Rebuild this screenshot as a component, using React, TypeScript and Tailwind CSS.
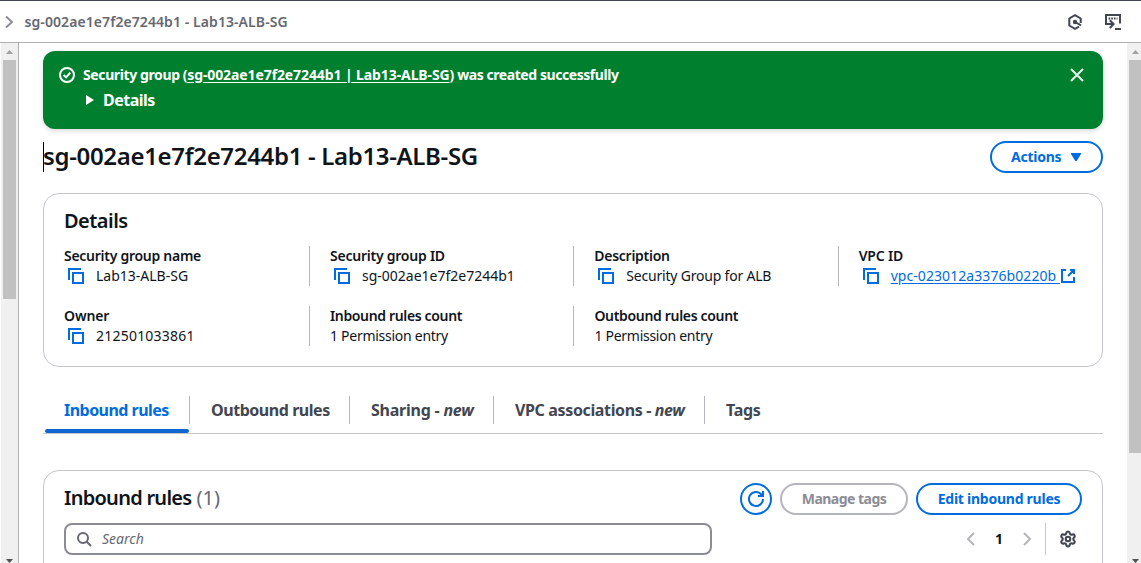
import type { ReactNode } from 'react';
import { Settings } from 'lucide-react';

function Icon({ children, className = '' }: { children: ReactNode; className?: string }) {
  return (
    <svg viewBox="0 0 16 16" className={`size-4 shrink-0 fill-none stroke-current stroke-2 ${className}`}>
      {children}
    </svg>
  );
}

function CopyIcon() {
  return (
    <Icon className="ml-1 mr-3 mt-0.5 text-[#006ce0]">
      <path d="M15 5H5v10h10V5Z" />
      <path d="M1 12V1h12" />
    </Icon>
  );
}

function Field({ label, spacing, copy, children, first }: { label: string; spacing: string; copy?: boolean; children: ReactNode; first?: boolean }) {
  return (
    <div className={first ? 'h-10 w-[245px]' : 'h-10 w-[264.4px] border-l border-[#b4b4bb] pl-5'}>
      <div className={`h-5 font-semibold ${spacing}`}>{label}</div>
      <div className="flex h-5 whitespace-nowrap">
        {copy && <CopyIcon />}
        {children}
      </div>
    </div>
  );
}

function Scrollbar({ side }: { side: 'left' | 'right' }) {
  const left = side === 'left';
  return (
    <div className={left ? 'flex w-[19px] shrink-0 flex-col items-center border-r border-l border-l-white border-r-[#b0b0b0] bg-[#f0f0f0]' : 'flex w-3.5 shrink-0 flex-col items-center bg-[#f0f0f0]'}>
      <svg viewBox="0 0 17 17" className={left ? 'h-[17px] w-[17px] shrink-0' : 'ml-0.5 h-[17px] w-[17px] shrink-0'}>
        <path d="M5 11h7L8.5 7Z" fill="#a0a0a0" />
      </svg>
      <div className={left ? 'h-[239px] w-[13px] bg-[#c1c1c1]' : 'h-[393px] w-3 self-end bg-[#c1c1c1]'} />
      <svg viewBox="0 0 17 5" className={left ? 'mt-auto h-[5px] w-[17px] shrink-0' : 'ml-0.5 mt-auto h-[5px] w-[17px] shrink-0'}>
        <path d="M5 1h7L8.5 5Z" fill="#505050" />
      </svg>
    </div>
  );
}

function Tab({ children, className = '' }: { children: ReactNode; className?: string }) {
  return (
    <div className={`h-7 whitespace-pre border-l border-[#b4b4bb] pl-[21px] leading-7 ${className}`}>{children}</div>
  );
}

export default function App() {
  return (
    <div className="flex h-[563px] w-[1141px] flex-col overflow-hidden border-t border-[#424650] bg-white font-['Noto_Sans',sans-serif] text-sm leading-5 text-[#0f141a]">
      <header className="flex h-[42px] shrink-0 items-center border-b border-[#b0b0b0]">
        <svg viewBox="0 0 10 16" className="ml-1 h-4 w-2.5 fill-none stroke-[#8c8c94] stroke-2">
          <path d="m2 2.5 6 5.5-6 5.5" />
        </svg>
        <span className="ml-[10.5px] font-semibold tracking-[0.08px] text-[#656871]">sg-002ae1e7f2e7244b1 - Lab13-ALB-SG</span>
        <Icon className="ml-auto text-[#424650]">
          <path d="M13.7 9V4.5L8 1.2 2.3 4.5v7L8 14.8l4-2.2" />
          <circle cx="8" cy="8" r="1.2" />
          <path d="m8 8 6 3.4" />
        </Icon>
        <Icon className="ml-[22px] mr-5 text-[#424650]">
          <path d="M15 9.5V1H1v9h7.5" />
          <path d="m4.8 6.2 3.8 3.8-3.8 4M10 15h6" />
          <path d="M3.5 4.5h9" strokeDasharray="1.7 1" />
        </Icon>
      </header>
      <div className="flex min-h-0 flex-1">
        <Scrollbar side="left" />
        <main className="flex min-w-0 flex-1 flex-col pl-6 pr-6 pt-2">
          <section className="flex h-[78px] shrink-0 rounded-xl bg-[#00802f] pl-4 pt-3.5 font-bold text-white shadow-[0_2px_5px_rgba(0,7,22,0.15)]">
            <Icon className="mt-0.5">
              <circle cx="8" cy="8" r="7" />
              <path d="m4.6 8 2.5 2.4 4.2-4.8" />
            </Icon>
            <div className="ml-2 whitespace-pre">
              <div className="h-5">
                <span className="tracking-[-0.39px]">Security group (</span>
                <span className="tracking-[-0.1px] underline underline-offset-2">sg-002ae1e7f2e7244b1 | Lab13-ALB-SG</span>
                <span className="tracking-[-0.43px]">) was created successfully</span>
              </div>
              <div className="mt-[5px] flex h-5 items-center text-base leading-5 tracking-[-0.5px]">
                <svg viewBox="0 0 9 12" className="ml-[3px] mr-2 h-3 w-[9px] fill-white">
                  <path d="M0 1v10l8-5Z" />
                </svg>
                Details
              </div>
            </div>
            <Icon className="ml-auto mr-[18px] mt-0.5 text-[#e6f3ea]">
              <path d="m2 2 12 12M14 2 2 14" />
            </Icon>
          </section>

          <div className="mt-3 flex h-8 shrink-0 items-center justify-between">
            <h1 className="relative h-8 text-2xl font-semibold leading-[30px] tracking-[-0.33px]">
              <span className="absolute left-0 top-px h-[30px] w-px bg-black" />
              sg-002ae1e7f2e7244b1 - Lab13-ALB-SG
            </h1>
            <button className="flex h-8 w-[113px] items-center rounded-full border-2 border-[#006ce0] pl-[19px] font-bold tracking-[-0.25px] text-[#006ce0]">
              Actions
              <svg viewBox="0 0 12 10" className="ml-[9px] h-2.5 w-3 fill-[#006ce0]">
                <path d="M1 1h10v1L6.7 9H5.3L1 2Z" />
              </svg>
            </button>
          </div>

          <section className="mt-5 h-[174px] shrink-0 rounded-2xl border border-[#c6c6cd] pl-5 pt-[15px]">
            <h2 className="h-6 text-xl font-semibold leading-6 tracking-[-0.53px]">Details</h2>
            <div className="mt-[13px] flex">
              <Field first copy label="Security group name" spacing="tracking-[-0.27px]">Lab13-ALB-SG</Field>
              <Field copy label="Security group ID" spacing="tracking-[-0.23px]">sg-002ae1e7f2e7244b1</Field>
              <Field copy label="Description" spacing="tracking-[-0.27px]">
                <span className="tracking-[-0.2px]">Security Group for ALB</span>
              </Field>
              <Field copy label="VPC ID" spacing="tracking-[-0.15px]">
                <a className="flex text-[#006ce0]">
                  <span className="whitespace-pre tracking-[0.07px] underline underline-offset-2">vpc-023012a3376b0220b </span>
                  <Icon className="mt-0.5">
                    <path d="M10 2h4v4M8 8l6-6M14 9v5H2V2h4" />
                  </Icon>
                </a>
              </Field>
            </div>
            <div className="mt-5 flex">
              <Field first copy label="Owner" spacing="tracking-[-0.1px]">
                <span className="tracking-[0.22px]">212501033861</span>
              </Field>
              <Field label="Inbound rules count" spacing="tracking-[-0.35px]">
                <span className="tracking-[-0.27px]">1 Permission entry</span>
              </Field>
              <Field label="Outbound rules count" spacing="tracking-[-0.32px]">
                <span className="tracking-[-0.27px]">1 Permission entry</span>
              </Field>
            </div>
          </section>

          <nav className="mt-5 flex h-[47px] shrink-0 border-b border-[#c6c6cd] pt-[9px] text-base font-bold text-[#424650]">
            <div className="w-[146px] pl-0.5 text-[#006ce0]">
              <div className="h-[33px] pl-[19px] leading-7 tracking-[-0.53px]">Inbound rules</div>
              <div className="h-1 w-36 rounded-sm bg-[#0f66cf]" />
            </div>
            <Tab className="w-40 tracking-[-0.45px]">Outbound rules</Tab>
            <Tab className="w-36 tracking-[-0.23px]">Sharing - <em>new</em></Tab>
            <Tab className="w-[211px] tracking-[-0.36px]">VPC associations - <em>new</em></Tab>
            <Tab className="tracking-[-0.3px]">Tags</Tab>
          </nav>

          <section className="mt-9 h-40 shrink-0 rounded-t-2xl border border-[#c6c6cd] px-5 pt-3">
            <div className="flex h-8 items-center font-bold">
              <h2 className="mb-0.5 mr-auto flex text-xl leading-6">
                <span className="font-semibold tracking-[-0.73px]">Inbound rules</span>
                <span className="ml-[5px] font-normal text-[#656871]">(1)</span>
              </h2>
              <button className="flex size-8 items-center justify-center rounded-full border-2 border-[#006ce0] text-[#006ce0]">
                <Icon>
                  <path d="M15 8a7 7 0 1 1-1.6-4.5L14.5 5" />
                  <path d="M10 5h5V0" />
                </Icon>
              </button>
              <button className="ml-2 h-8 w-32 rounded-full border-2 border-[#b4b4bb] leading-7 tracking-[-0.52px] text-[#8c8c94]">Manage tags</button>
              <button className="ml-2 h-8 w-[166px] rounded-full border-2 border-[#006ce0] leading-7 tracking-[-0.25px] text-[#006ce0]">Edit inbound rules</button>
            </div>
            <div className="mt-2 flex h-8 items-center">
              <div className="flex h-8 w-[648px] items-center rounded-lg border-2 border-[#8c8c94] pl-2.5 text-[#656871]">
                <Icon>
                  <circle cx="7" cy="7" r="5" />
                  <path d="m10.5 10.5 4.5 4.5" />
                </Icon>
                <span className="ml-2.5 italic">Search</span>
              </div>
              <Icon className="ml-auto text-[#b4b4bb]">
                <path d="m11 2-6 6 6 6" />
              </Icon>
              <span className="w-10 text-center font-bold">1</span>
              <Icon className="text-[#b4b4bb]">
                <path d="m5 2 6 6-6 6" />
              </Icon>
              <div className="ml-2.5 h-8 w-px bg-[#c6c6cd]" />
              <Settings className="ml-[13px] mr-[5px] size-[18px] text-[#424650]" strokeWidth={2.8} />
            </div>
          </section>
        </main>
        <Scrollbar side="right" />
      </div>
    </div>
  );
}
